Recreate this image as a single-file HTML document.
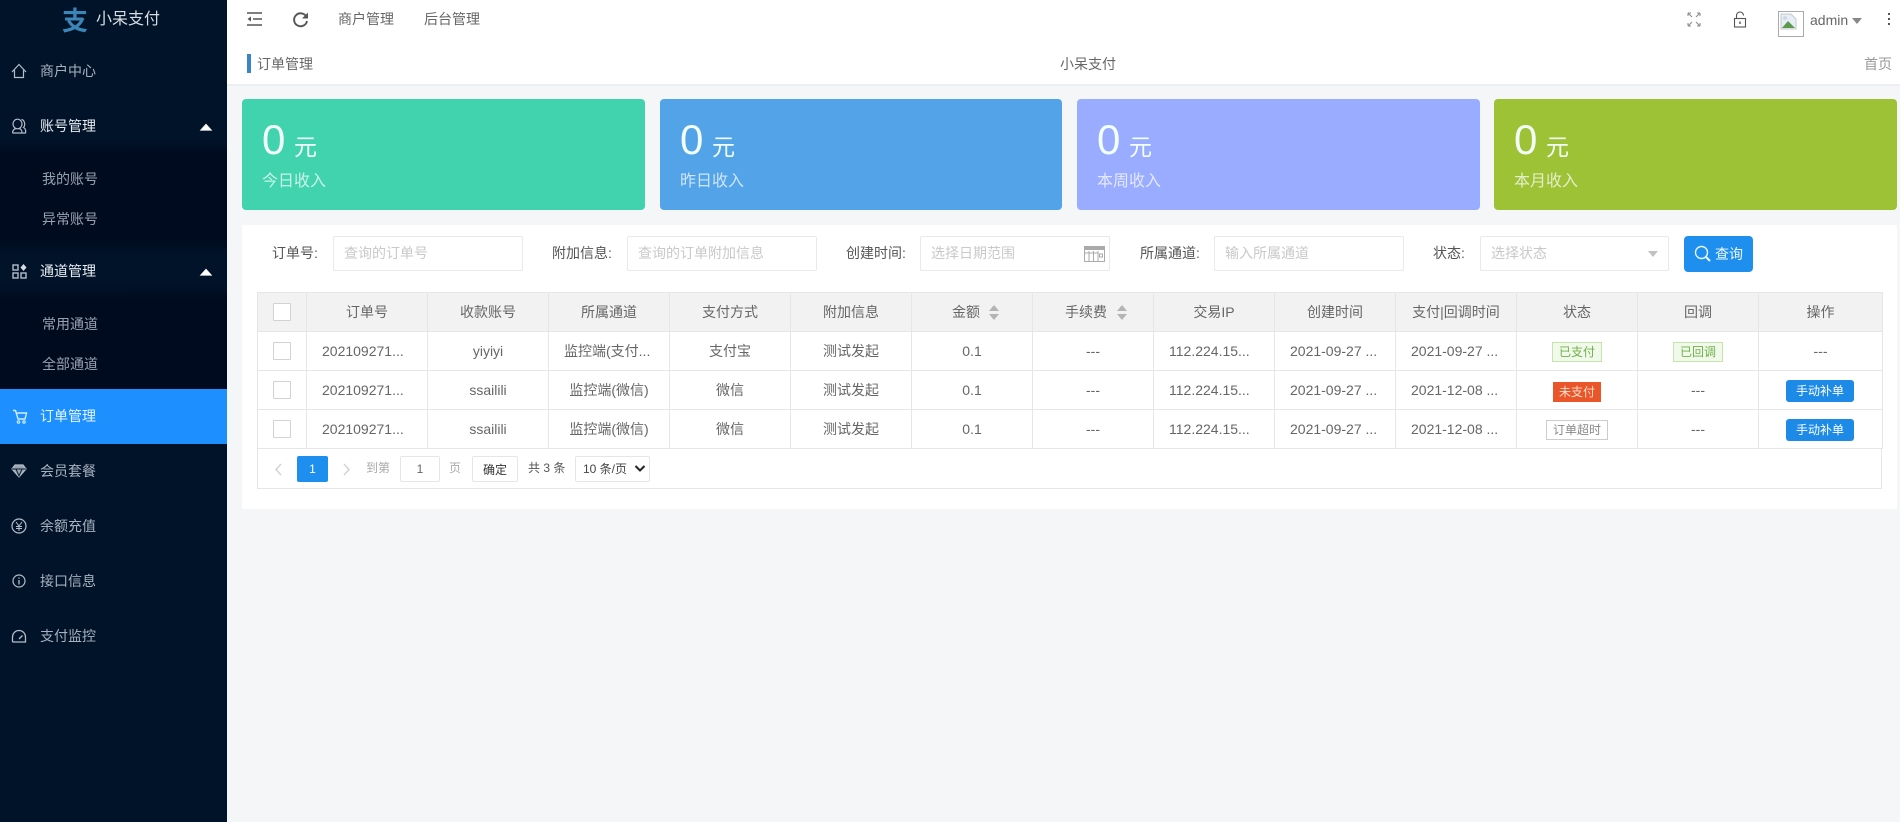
<!DOCTYPE html>
<html lang="zh"><head><meta charset="utf-8"><title>订单管理</title>
<style>
*{box-sizing:border-box}
html,body{margin:0;padding:0;width:1900px;height:822px;overflow:hidden;background:#f5f6f8;font-family:"Liberation Sans","Noto Sans CJK SC",sans-serif;font-size:14px;color:#666}
#wrap{position:absolute;left:0;top:0;width:1900px;height:822px;overflow:hidden;background:#f5f6f8;filter:blur(.35px)}
.t{position:absolute;white-space:nowrap;line-height:20px}
.a{position:absolute}
#side{position:absolute;left:0;top:0;width:227px;height:822px;background:#011329}
.m{color:#a8b2bf}.w{color:#e8edf2}.s{color:#98a2b0}
.card{position:absolute;top:99px;height:111px;border-radius:4px}
.card .n{position:absolute;left:20px;top:17px;font-size:42px;line-height:48px;color:#f3fff9}
.card .y{position:absolute;left:52px;top:33px;font-size:23px;line-height:30px;color:#f3fff9}
.card .c{position:absolute;left:20px;top:73px;font-size:16px;line-height:20px;color:rgba(255,255,255,.72)}
.ip{position:absolute;top:236px;height:35px;background:#fff;border:1px solid #e9e9e9;border-radius:2px;padding-left:10px;line-height:33px;color:#c9c9c9;white-space:nowrap}
.lb{top:243px;color:#555}
table{position:absolute;left:257px;top:292px;width:1625px;table-layout:fixed;border-collapse:collapse;background:#fff}
td,th{height:39px;border:1px solid #e6e6e6;padding:0;text-align:center;font-weight:400;color:#666;white-space:nowrap;overflow:hidden}
th{background:#f2f2f2}
td.l{text-align:left;padding-left:15px}
.cb{display:inline-block;width:18px;height:18px;border:1px solid #d2d2d2;background:#fff;vertical-align:middle;border-radius:1px}
.tag{position:absolute;height:20px;line-height:18px;font-size:12px;text-align:center;border:1px solid;white-space:nowrap}
.btn{position:absolute;left:1786px;width:68px;height:22px;line-height:22px;background:#1e8ae8;color:#fff;font-size:12px;text-align:center;border-radius:3px}
.arr{position:absolute;width:0;height:0;border-left:5.5px solid transparent;border-right:5.5px solid transparent}
</style></head><body><div id="wrap">

<div id="side">
  <div class="a" style="left:0;top:140px;width:227px;height:115px;background:linear-gradient(#011329 0,#000b1f 14px,#000b1f 100px,#011329 115px)"></div>
  <div class="a" style="left:0;top:285px;width:227px;height:104px;background:linear-gradient(#011329 0,#000b1f 14px,#000b1f 100%)"></div>
  <div class="a" style="left:0;top:389px;width:227px;height:55px;background:#1e8fff"></div>

  <div class="t" style="left:62px;top:6px;font-size:26px;line-height:30px;color:#3a86b8;font-weight:700;width:26px">支</div>
  <div class="t" style="left:96px;top:10px;font-size:16px;color:#d8dde3">小呆支付</div>

  <div class="t m" style="left:40px;top:61px">商户中心</div>
  <div class="t w" style="left:40px;top:116px">账号管理</div>
  <div class="t s" style="left:42px;top:169px">我的账号</div>
  <div class="t s" style="left:42px;top:209px">异常账号</div>
  <div class="t w" style="left:40px;top:261px">通道管理</div>
  <div class="t s" style="left:42px;top:314px">常用通道</div>
  <div class="t s" style="left:42px;top:354px">全部通道</div>
  <div class="t" style="left:40px;top:406px;color:#e4f6ff">订单管理</div>
  <div class="t m" style="left:40px;top:461px">会员套餐</div>
  <div class="t m" style="left:40px;top:516px">余额充值</div>
  <div class="t m" style="left:40px;top:571px">接口信息</div>
  <div class="t m" style="left:40px;top:626px">支付监控</div>

  <svg class="a" style="left:0;top:0" width="227" height="660" fill="none" stroke="#b4bdc9" stroke-width="1.2">
    <path d="M12 72 L19 64.5 L26 72 M14.5 70 V77.5 H23.5 V70"/>
    <ellipse cx="17.5" cy="124" rx="4.5" ry="4.8"/><path d="M12.5 133 C12.5 130 14 129 16 128.5 M19 128.5 C21 129 22 130 22 133 H12.5 M21.5 119.5 C25 120 25.5 125.5 23.5 127.5 C25.5 128.5 26 130.5 25.5 133 H22"/>
    <path d="M201 130 L206 124.5 L211 130 Z" fill="#fff" stroke="#fff"/>
    <path d="M201 275 L206 269.5 L211 275 Z" fill="#fff" stroke="#fff"/>
    <rect x="13" y="265" width="5" height="5" stroke-width="1.4"/><rect x="13" y="273" width="5" height="5" stroke-width="1.4"/><rect x="21" y="273" width="5" height="5" stroke-width="1.4"/>
    <path d="M23.5 264 L26.5 267.5 L23.5 271 L20.5 267.5 Z" fill="#d6dce4" stroke="none"/>
    <path d="M13 410.5 H15.5 L18 419 H25 L26.5 413 H16" stroke="#cfeeff" stroke-width="1.4"/><circle cx="18.5" cy="422" r="1.2" stroke="#cfeeff"/><circle cx="24" cy="422" r="1.2" stroke="#cfeeff"/>
    <path d="M15 465 H23 L26 469 L19 477 L12 469 Z" fill="#9aa5b3" stroke="#b4bdc9"/><path d="M12 469 H26 M16 469 L19 476 L22 469" stroke="#0a1d33" stroke-width="1"/>
    <circle cx="19" cy="526" r="7"/><path d="M16 522 L19 526 L22 522 M19 526 V531 M16 526.5 H22 M16 528.5 H22" stroke-width="1"/>
    <circle cx="19" cy="581" r="6"/><path d="M19 580 V584.5 M19 577.5 V578.7" stroke-width="1.3"/>
    <path d="M13 642 H25.5 V637 A6.5 6.5 0 0 0 12.5 637 V641.5 Z" stroke-width="1.3"/><path d="M19 639 L22.5 635.5" stroke-width="1.3"/>
  </svg>
</div>

<!-- top bar -->
<div class="a" style="left:227px;top:0;width:1673px;height:84px;background:#fff"></div>
<div class="a" style="left:227px;top:84px;width:1673px;height:2px;background:#eceef1"></div>
<svg class="a" style="left:240px;top:8px" width="80" height="24" fill="none" stroke="#555" stroke-width="1.6">
  <path d="M7 5 H22 M13 11 H22 M7 17 H22"/><path d="M11 8.5 L7.5 11 L11 13.5 Z" fill="#555" stroke="none"/>
  <path d="M66.5 9 A6.5 6.5 0 1 0 67 13" stroke-width="1.9"/><path d="M68 4.5 V10.5 H62 Z" fill="#555" stroke="none"/>
</svg>
<div class="t" style="left:338px;top:9px;color:#666">商户管理</div>
<div class="t" style="left:424px;top:9px;color:#666">后台管理</div>

<div class="a" style="left:247px;top:54px;width:4px;height:19px;background:#3a85c6"></div>
<div class="t" style="left:257px;top:54px;color:#666">订单管理</div>
<div class="t" style="left:1060px;top:54px;color:#666">小呆支付</div>
<div class="t" style="left:1864px;top:54px;color:#999">首页</div>

<svg class="a" style="left:1685px;top:8px" width="70" height="24" fill="none" stroke="#888" stroke-width="1">
  <path d="M3 5 H6 V5 M3 5 V8 M3 5 L7 9 M15 5 H12 M15 5 V8 M15 5 L11 9 M3 18 V15 M3 18 H6 M3 18 L7 14 M15 18 H12 M15 18 V15 M15 18 L11 14"/>
  <rect x="49.5" y="10.5" width="11" height="8.5" stroke="#555" stroke-width="1.1"/><path d="M51.5 10.5 V7.5 A3.5 3.5 0 0 1 58.5 7.5" stroke="#555" stroke-width="1.1"/><path d="M55 13.5 V16" stroke="#555" stroke-width="1.4"/>
</svg>
<div class="a" style="left:1778px;top:11px;width:26px;height:26px;border:1px solid #aaa;background:#fff"></div>
<svg class="a" style="left:1780px;top:13px" width="18" height="18">
  <path d="M1 1 H11 L16 6 V16 H1 Z" fill="#e8eef5" stroke="#bbb" stroke-width=".8"/>
  <path d="M2 15 L8 8 L15 15 Z" fill="#5b9a4e"/><circle cx="5" cy="5" r="2" fill="#cfd9e6"/>
</svg>
<div class="t" style="left:1810px;top:10px;color:#666">admin</div>
<div class="a" style="left:1852px;top:18px;border-left:5.5px solid transparent;border-right:5.5px solid transparent;border-top:6px solid #888;width:0;height:0"></div>
<div class="a" style="left:1888px;top:13px;width:2.4px;height:2.4px;background:#555"></div>
<div class="a" style="left:1888px;top:18px;width:2.4px;height:2.4px;background:#555"></div>
<div class="a" style="left:1888px;top:23px;width:2.4px;height:2.4px;background:#555"></div>

<!-- cards -->
<div class="card" style="left:242px;width:403px;background:#41d3ae"><div class="n">0</div><div class="y">元</div><div class="c">今日收入</div></div>
<div class="card" style="left:660px;width:402px;background:#52a3e8"><div class="n">0</div><div class="y">元</div><div class="c">昨日收入</div></div>
<div class="card" style="left:1077px;width:403px;background:#9aacff"><div class="n">0</div><div class="y">元</div><div class="c">本周收入</div></div>
<div class="card" style="left:1494px;width:403px;background:#9dc236"><div class="n">0</div><div class="y">元</div><div class="c">本月收入</div></div>

<!-- panel -->
<div class="a" style="left:242px;top:225px;width:1655px;height:284px;background:#fff;border-radius:2px"></div>

<div class="t lb" style="left:272px">订单号:</div>
<div class="ip" style="left:333px;width:190px">查询的订单号</div>
<div class="t lb" style="left:552px">附加信息:</div>
<div class="ip" style="left:627px;width:190px">查询的订单附加信息</div>
<div class="t lb" style="left:846px">创建时间:</div>
<div class="ip" style="left:920px;width:190px">选择日期范围</div>
<svg class="a" style="left:1084px;top:246px" width="22" height="17" fill="none" stroke="#aaa" stroke-width="1">
  <rect x=".5" y=".5" width="20" height="15"/><rect x="0" y="0" width="21" height="4" fill="#aaa" stroke="none"/>
  <path d="M1 7 H14 M5 5 V15 M9.5 5 V15 M14 5 V15"/><rect x="15.5" y="8" width="3" height="3"/>
</svg>
<div class="t lb" style="left:1140px">所属通道:</div>
<div class="ip" style="left:1214px;width:190px">输入所属通道</div>
<div class="t lb" style="left:1433px">状态:</div>
<div class="ip" style="left:1480px;width:189px">选择状态</div>
<div class="a" style="left:1648px;top:251px;border-left:5.5px solid transparent;border-right:5.5px solid transparent;border-top:6px solid #c2c2c2;width:0;height:0"></div>
<div class="a" style="left:1684px;top:236px;width:69px;height:36px;background:#1e8fee;border-radius:4px"></div>
<svg class="a" style="left:1694px;top:245px" width="18" height="18" fill="none" stroke="#e8f6ff" stroke-width="1.4"><circle cx="7.5" cy="7.5" r="6"/><path d="M12 12 L16 16" stroke-width="2"/></svg>
<div class="t" style="left:1715px;top:244px;color:#eef9ff">查询</div>

<!-- table frame including pagination -->
<div class="a" style="left:257px;top:292px;width:1625px;height:197px;border:1px solid #e6e6e6;background:#fff"></div>
<table>
<colgroup><col style="width:49px"><col style="width:121px"><col style="width:121px"><col style="width:121px"><col style="width:121px"><col style="width:121px"><col style="width:121px"><col style="width:121px"><col style="width:121px"><col style="width:121px"><col style="width:121px"><col style="width:121px"><col style="width:121px"><col style="width:124px"></colgroup>
<tr><th><span class="cb"></span></th><th>订单号</th><th>收款账号</th><th>所属通道</th><th>支付方式</th><th>附加信息</th><th style="text-align:left;padding-left:40px">金额</th><th style="text-align:left;padding-left:32px">手续费</th><th>交易IP</th><th>创建时间</th><th>支付|回调时间</th><th>状态</th><th>回调</th><th>操作</th></tr>
<tr><td><span class="cb"></span></td><td class="l">202109271...</td><td>yiyiyi</td><td class="l">监控端(支付...</td><td>支付宝</td><td>测试发起</td><td>0.1</td><td>---</td><td class="l">112.224.15...</td><td class="l">2021-09-27 ...</td><td class="l">2021-09-27 ...</td><td></td><td></td><td>---</td></tr>
<tr><td><span class="cb"></span></td><td class="l">202109271...</td><td>ssailili</td><td>监控端(微信)</td><td>微信</td><td>测试发起</td><td>0.1</td><td>---</td><td class="l">112.224.15...</td><td class="l">2021-09-27 ...</td><td class="l">2021-12-08 ...</td><td></td><td>---</td><td></td></tr>
<tr><td><span class="cb"></span></td><td class="l">202109271...</td><td>ssailili</td><td>监控端(微信)</td><td>微信</td><td>测试发起</td><td>0.1</td><td>---</td><td class="l">112.224.15...</td><td class="l">2021-09-27 ...</td><td class="l">2021-12-08 ...</td><td></td><td>---</td><td></td></tr>
</table>

<div class="arr" style="left:988.5px;top:305px;border-bottom:6px solid #b4b4b4"></div>
<div class="arr" style="left:988.5px;top:314px;border-top:6px solid #b4b4b4"></div>
<div class="arr" style="left:1116.5px;top:305px;border-bottom:6px solid #b4b4b4"></div>
<div class="arr" style="left:1116.5px;top:314px;border-top:6px solid #b4b4b4"></div>

<div class="tag" style="left:1552px;top:342px;width:50px;background:#f1faea;border-color:#c6e2ad;color:#6fb04a">已支付</div>
<div class="tag" style="left:1673px;top:342px;width:50px;background:#f1faea;border-color:#c6e2ad;color:#6fb04a">已回调</div>
<div class="tag" style="left:1553px;top:382px;width:48px;background:#e9562a;border-color:#e9562a;color:#ffe0cf">未支付</div>
<div class="tag" style="left:1546px;top:420px;width:62px;background:#fff;border-color:#ccc;color:#888">订单超时</div>
<div class="btn" style="top:380px">手动补单</div>
<div class="btn" style="top:419px">手动补单</div>

<!-- pagination -->
<svg class="a" style="left:270px;top:458px" width="85" height="22" fill="none" stroke="#d2d2d2" stroke-width="1.4"><path d="M11 6 L6 11.5 L11 17"/><path d="M74 6 L79 11.5 L74 17"/></svg>
<div class="a" style="left:297px;top:456px;width:31px;height:26px;line-height:26px;background:#1e8fee;color:#fff;text-align:center;font-size:12px;border-radius:2px">1</div>
<div class="t" style="left:366px;top:458px;font-size:12px;color:#aaa">到第</div>
<div class="a" style="left:400px;top:456px;width:40px;height:26px;line-height:24px;border:1px solid #e6e6e6;text-align:center;font-size:12px;color:#666;border-radius:2px">1</div>
<div class="t" style="left:449px;top:458px;font-size:12px;color:#aaa">页</div>
<div class="a" style="left:472px;top:456px;width:46px;height:26px;line-height:26px;border:1px solid #e6e6e6;text-align:center;font-size:12px;color:#333;border-radius:2px">确定</div>
<div class="t" style="left:528px;top:458px;font-size:12px;color:#555">共 3 条</div>
<div class="a" style="left:575px;top:456px;width:75px;height:26px;line-height:24px;border:1px solid #e6e6e6;font-size:12px;color:#444;padding-left:7px;border-radius:2px;white-space:nowrap">10 条/页</div>
<svg class="a" style="left:634px;top:464px" width="12" height="10" fill="none" stroke="#222" stroke-width="2"><path d="M1.5 2 L6 6.5 L10.5 2"/></svg>

</div></body></html>
